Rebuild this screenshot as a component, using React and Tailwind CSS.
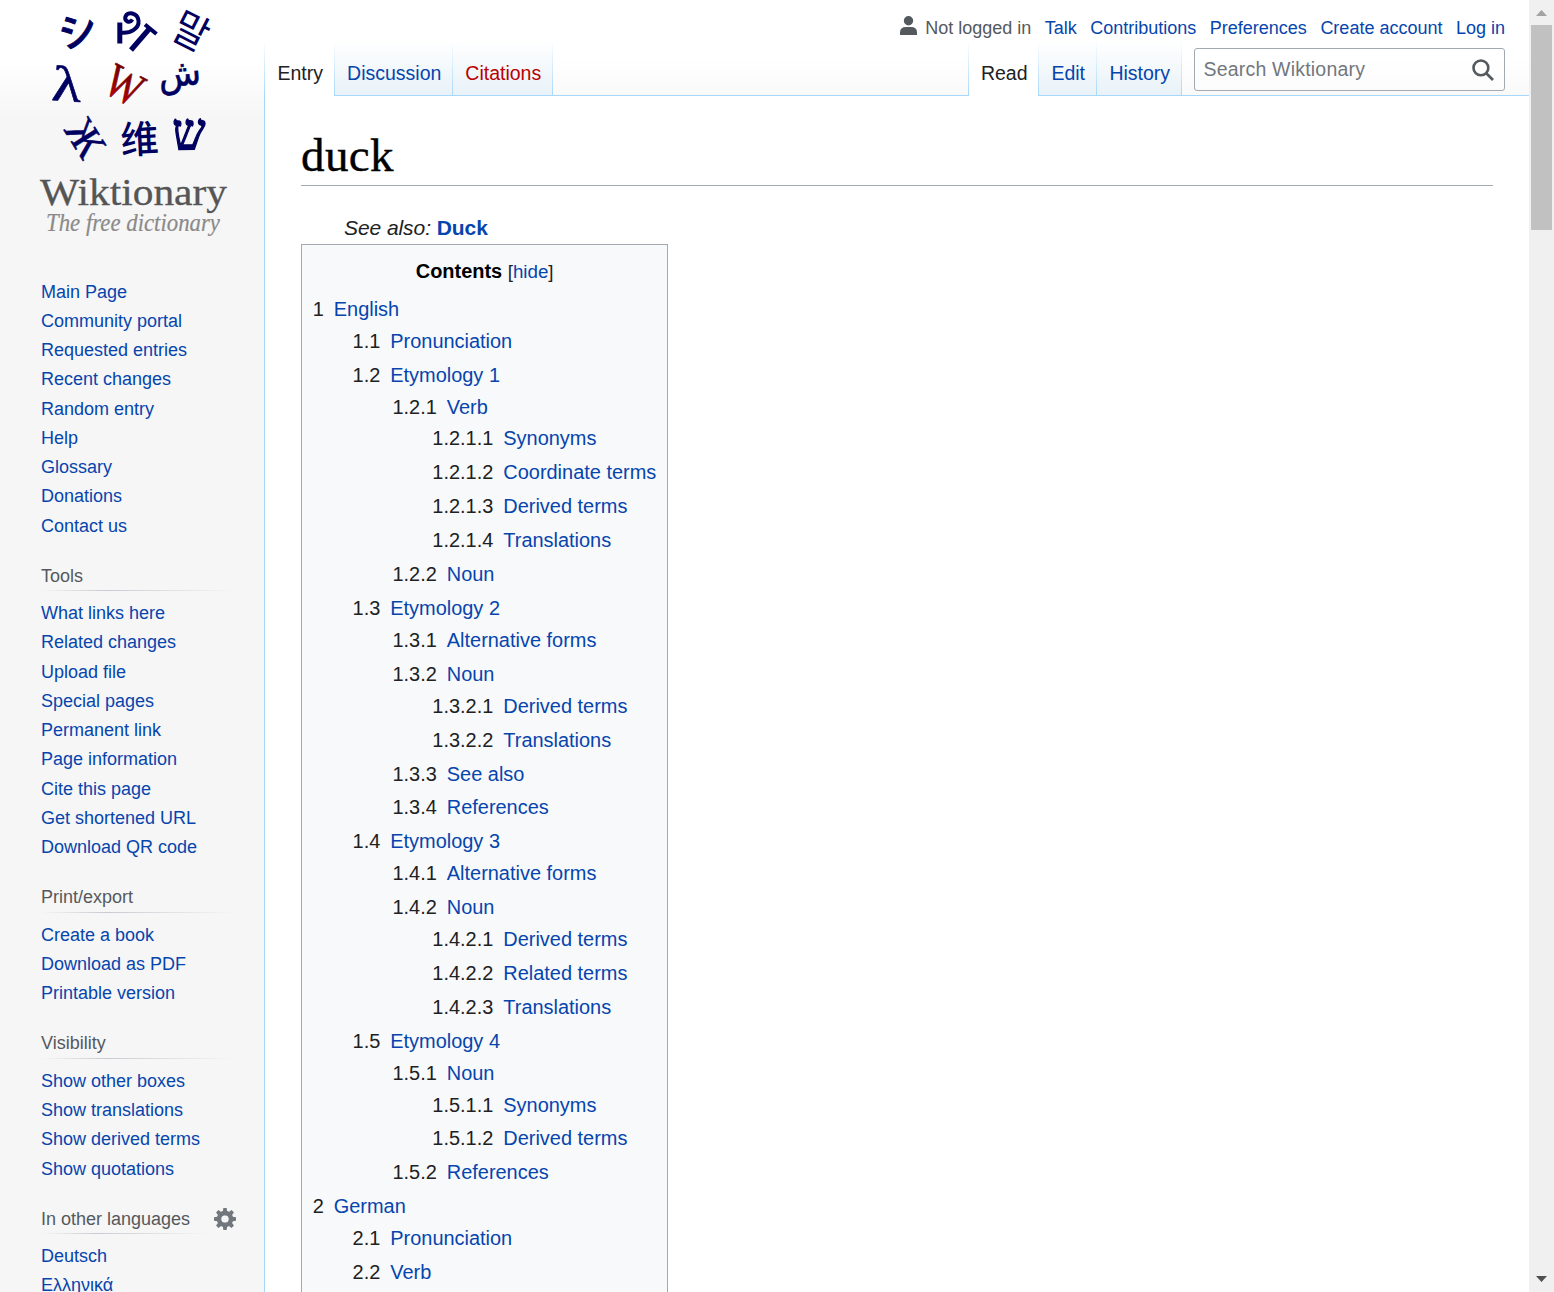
import React from 'react';

const NAV = [
  { items: ['Main Page', 'Community portal', 'Requested entries', 'Recent changes', 'Random entry', 'Help', 'Glossary', 'Donations', 'Contact us'] },
  { title: 'Tools', items: ['What links here', 'Related changes', 'Upload file', 'Special pages', 'Permanent link', 'Page information', 'Cite this page', 'Get shortened URL', 'Download QR code'] },
  { title: 'Print/export', items: ['Create a book', 'Download as PDF', 'Printable version'] },
  { title: 'Visibility', items: ['Show other boxes', 'Show translations', 'Show derived terms', 'Show quotations'] },
  { title: 'In other languages', gear: true, items: ['Deutsch', 'Ελληνικά'] },
];

const n = (label, ...children) => ({ label, children });
const TOC = [
  n('English',
    n('Pronunciation'),
    n('Etymology 1',
      n('Verb', n('Synonyms'), n('Coordinate terms'), n('Derived terms'), n('Translations')),
      n('Noun')),
    n('Etymology 2',
      n('Alternative forms'),
      n('Noun', n('Derived terms'), n('Translations')),
      n('See also'),
      n('References')),
    n('Etymology 3',
      n('Alternative forms'),
      n('Noun', n('Derived terms'), n('Related terms'), n('Translations'))),
    n('Etymology 4',
      n('Noun', n('Synonyms'), n('Derived terms')),
      n('References'))),
  n('German', n('Pronunciation'), n('Verb')),
];

function TocList({ items, prefix = '' }) {
  return (
    <ul className={prefix ? 'pl-[39.9px]' : ''}>
      {items.map((item, i) => {
        const num = prefix + (i + 1);
        return (
          <li key={num} className="mb-[2px]">
            <a className="flex h-[31.92px] items-center whitespace-nowrap">
              <span className="pr-[9.975px] text-[#202122]">{num}</span>
              <span className="text-[#0645ad]">{item.label}</span>
            </a>
            {item.children.length > 0 && <TocList items={item.children} prefix={num + '.'} />}
          </li>
        );
      })}
    </ul>
  );
}

function Logo() {
  return (
    <svg className="block h-[250px] w-[264px]" viewBox="0 0 264 250">
      <g fill="#000060" textAnchor="middle">
        <text x="0" y="14" fontSize="39" fontWeight="500" stroke="#000060" strokeWidth=".8" fontFamily="Noto Sans CJK JP" transform="translate(78 31) rotate(-15)">シ</text>
        <g fill="none" stroke="#000060" strokeWidth="4">
          <path d="M119.800 22.500V43.500" strokeWidth="5" />
          <path d="M120 32.500C131 34 139.500 28 138.500 20.500C137.500 12.500 127.500 11 125.500 16.500C124 21 129.500 24 132.500 19.500" />
          <path d="M131 50L150 28" strokeWidth="5.200" />
          <path d="M145 24.500L156.500 34" />
        </g>
        <text x="0" y="15" fontSize="41" fontWeight="400" fontFamily="Noto Sans CJK KR" transform="translate(191 31) rotate(27) scale(.92 1)">말</text>
        <text x="0" y="17" fontSize="50" fontFamily="Liberation Serif" stroke="#000060" strokeWidth=".6" transform="translate(67 84) rotate(4) scale(1.220 1)">λ</text>
        <text x="0" y="5" fontSize="38" fontFamily="DejaVu Sans" stroke="#000060" strokeWidth=".6" transform="translate(180 81) rotate(-5) scale(.92 .95)">ش</text>
        <text x="0" y="14" fontSize="43" fontFamily="Liberation Serif" stroke="#000060" strokeWidth=".6" transform="translate(85 138) rotate(58) scale(.95 1)">Ж</text>
        <text x="0" y="14" fontSize="38" fontWeight="500" fontFamily="Noto Sans CJK SC" transform="translate(139.500 139) rotate(-3)">维</text>
        <text x="0" y="17" fontSize="52" fontFamily="Liberation Serif" stroke="#000060" strokeWidth="1.400" transform="translate(189 132.500) rotate(-1) scale(.9 1)">ש</text>
      </g>
      <defs>
        <linearGradient id="red" x1="0" y1="0" x2="0" y2="1">
          <stop offset="0" stopColor="#500" />
          <stop offset="1" stopColor="#c00" />
        </linearGradient>
      </defs>
      <text x="0" y="15" fontSize="48" fontFamily="Liberation Serif" fill="url(#red)" stroke="#800000" strokeWidth=".7" textAnchor="middle" transform="translate(124 86) rotate(28) scale(.8 1)">W</text>
      <text x="40" y="205" fontSize="38" fontFamily="Liberation Serif" fill="#555" stroke="#555" strokeWidth=".3" textLength="187" lengthAdjust="spacingAndGlyphs">Wiktionary</text>
      <text x="46" y="231" fontSize="26" fontStyle="italic" fontFamily="Liberation Serif" fill="#8a8a8a" stroke="#8a8a8a" strokeWidth=".2" textLength="174" lengthAdjust="spacingAndGlyphs">The free dictionary</text>
    </svg>
  );
}

const COG = 'M1.500-10h-3l-1 6.500h5m0 7h-5l1 6.500h3';

function Gear() {
  return (
    <svg className="h-[22px] w-[22px]" viewBox="0 0 20 20" fill="#72777d" fillRule="evenodd">
      <g transform="translate(10 10)">
        <path d={COG} />
        <path d={COG} transform="rotate(45)" />
        <path d={COG} transform="rotate(90)" />
        <path d={COG} transform="rotate(135)" />
      </g>
      <path d="M10 2.500a7.500 7.500 0 0 0 0 15 7.500 7.500 0 0 0 0-15v4a3.500 3.500 0 0 1 0 7 3.500 3.500 0 0 1 0-7" />
    </svg>
  );
}

function Sidebar() {
  return (
    <aside className="w-[264px] shrink-0">
      <Logo />
      {NAV.map((s, i) => (
        <nav key={i} className={s.title ? 'pt-[25.65px]' : 'pt-[22.85px]'}>
          {s.title && (
            <div className="flex">
              <div className={s.gear ? 'ml-[41px] w-[168px]' : 'ml-[41px] w-[195px]'}>
                <h3 className="h-[28.6px] text-[18px] leading-[29px] whitespace-nowrap text-[#54595d]">{s.title}</h3>
                <div className="h-px bg-linear-to-r from-[#c8ccd1]/0 via-[#c8ccd1] via-33% to-[#c8ccd1]/0" />
              </div>
              {s.gear && <div className="ml-[5px] pt-[3px]"><Gear /></div>}
            </div>
          )}
          <ul className={s.title ? 'pt-[3.080px] pl-[41px]' : 'pl-[41px]'}>
            {s.items.map((t) => (
              <li key={t} className="mt-[0.75px] h-[28.5px] text-[18px] leading-[37px] whitespace-nowrap text-[#0645ad]">{t}</li>
            ))}
          </ul>
        </nav>
      ))}
    </aside>
  );
}

function Tab({ label, w, active, red }) {
  return (
    <div className={w + ' flex h-full shrink-0'}>
      <div className={(active ? 'bg-white' : 'mb-px bg-linear-to-b from-white to-[#e8f2f8]') + ' flex-1 pt-[17px] pl-[1.500px] text-center text-[19.5px] leading-[32px] ' + (red ? 'text-[#ba0000]' : active ? 'text-[#202122]' : 'text-[#0645ad]')}>{label}</div>
      <div className="w-px bg-linear-to-b from-white to-[#a7d7f9]" />
    </div>
  );
}

function Header() {
  return (
    <header className="h-[96px] bg-linear-to-b from-white from-[62%] to-[#f9f9f9]">
      <div className="flex h-[40px] items-start justify-end pt-[14px] pr-[24px] text-[18px] leading-[28px] whitespace-nowrap text-[#0645ad]">
        <svg className="mt-[2px] mr-[8px] h-[19px] w-[17px]" viewBox="0 0 17 19" fill="#54595d">
          <circle cx="8.500" cy="4.700" r="4.700" />
          <path d="M0 19v-2.500Q0 11 6 11h5q6 0 6 5.500V19z" />
        </svg>
        <span className="text-[#54595d]">Not logged in</span>
        {['Talk', 'Contributions', 'Preferences', 'Create account', 'Log in'].map((t) => <a key={t} className="ml-[13.5px]">{t}</a>)}
      </div>
      <div className="flex h-[56px] bg-[linear-gradient(#a7d7f9,#a7d7f9)] bg-[length:100%_1px] bg-bottom bg-no-repeat">
        <Tab label="Entry" w="w-[70px]" active />
        <Tab label="Discussion" w="w-[118px]" />
        <Tab label="Citations" w="w-[100px]" red />
        <div className="flex-1" />
        <div className="w-px bg-linear-to-b from-white to-[#a7d7f9]" />
        <Tab label="Read" w="w-[70px]" active />
        <Tab label="Edit" w="w-[58px]" />
        <Tab label="History" w="w-[85px]" />
        <div className="mt-[8px] mr-[24px] ml-[12px] flex h-[43px] w-[311px] items-center justify-between rounded-[3px] border border-[#a2a9b1] bg-white/40 pr-[10px] pl-[8.500px]">
          <span className="text-[19.5px] leading-[41px] tracking-[0.2px] text-[#72777d]">Search Wiktionary</span>
          <svg className="h-[22px] w-[22px]" viewBox="0 0 22 22" fill="none" stroke="#54595d" strokeWidth="2.600">
            <circle cx="8.900" cy="8.900" r="7.400" />
            <path d="M14 14L21 21" />
          </svg>
        </div>
      </div>
    </header>
  );
}

export default function App() {
  return (
    <div className="flex h-[1292px] w-[1554px] overflow-hidden bg-[#f6f6f6] bg-[linear-gradient(#fff_50%,#f6f6f6_100%)] bg-[length:100%_120px] bg-no-repeat font-['Liberation_Sans',sans-serif]">
      <Sidebar />
      <div className="w-px shrink-0 bg-[linear-gradient(#fff_40px,#a7d7f9_96px)]" />
      <div className="flex min-w-0 flex-1 flex-col">
        <Header />
        <main className="flex-1 bg-white pr-[36px] pl-[36px]">
          <h1 className="h-[90px] border-b border-[#a2a9b1] pt-[30px] font-['Liberation_Serif',serif] text-[47px] leading-[59px] tracking-[0.4px] text-black [-webkit-text-stroke:0.4px_black]">duck</h1>
          <div className="mt-[25px] h-[33px] pl-[43px] text-[21px] leading-[34px] tracking-[-0.07px] text-[#202122]">
            <i>See also:</i> <b className="text-[#0645ad]">Duck</b>
          </div>
          <div className="h-[1100px] w-[367px] border border-[#a2a9b1] bg-[#f8f9fa] pr-[10.300px] pl-[10.700px] pt-[10.500px] text-[19.95px]">
            <div className="mb-[6.35px] flex h-[32px] items-center justify-center">
              <h2 className="font-bold text-black">Contents</h2>
              <span className="pt-px pl-[5.500px] text-[18.75px] text-[#202122]">[<a className="text-[#0645ad]">hide</a>]</span>
            </div>
            <TocList items={TOC} />
          </div>
        </main>
      </div>
      <div className="flex w-[25px] shrink-0 flex-col items-center bg-[#f0f0f0]">
        <svg className="h-[25px] w-[25px] shrink-0" viewBox="0 0 25 25" fill="#a3a3a3"><path d="M7 16L12.500 10L18 16z" /></svg>
        <div className="h-[205px] w-[21px] bg-[#c1c1c1]" />
        <div className="flex-1" />
        <svg className="h-[25px] w-[25px] shrink-0" viewBox="0 0 25 25" fill="#505050"><path d="M7 9L12.500 15L18 9z" /></svg>
      </div>
    </div>
  );
}
